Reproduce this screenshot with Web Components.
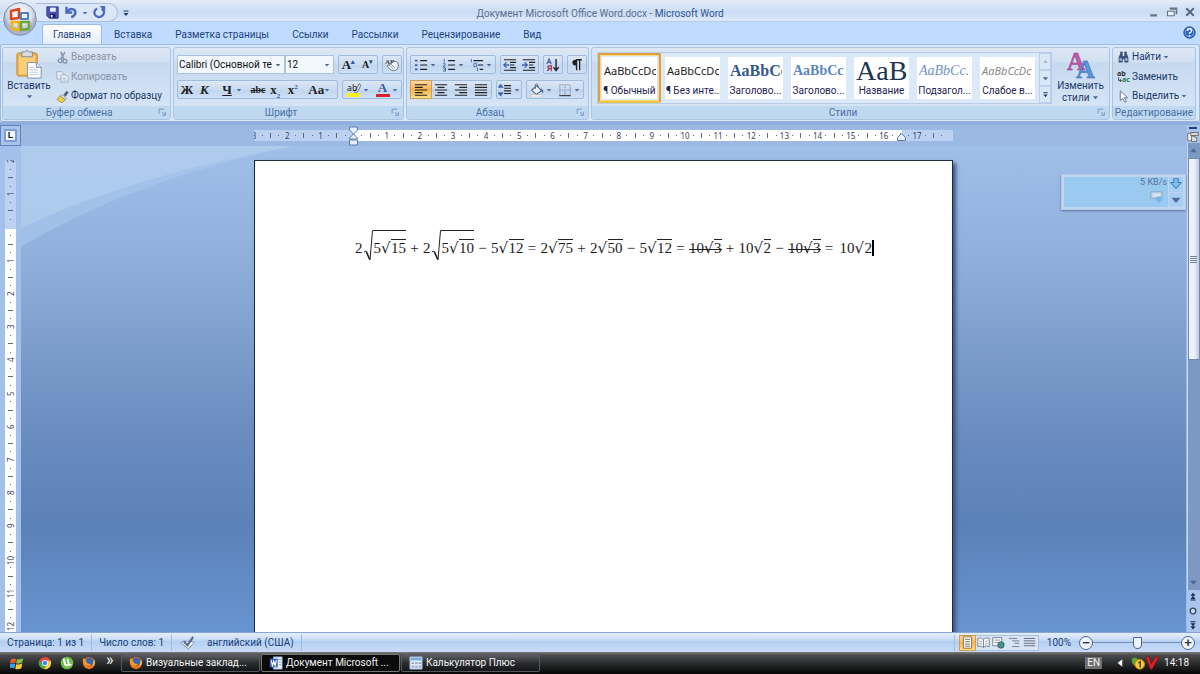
<!DOCTYPE html>
<html lang="ru">
<head>
<meta charset="utf-8">
<title>Документ Microsoft Office Word.docx - Microsoft Word</title>
<style>
html,body{margin:0;height:100%;overflow:hidden}
body{font-family:Roboto,"Noto Sans",sans-serif;font-size:10px;line-height:14px;color:#1b3a6b}
</style>
</head>
<body>
<word-app></word-app>
<script>
const define = (name, css, html, ready) => {
  const t = document.createElement('template');
  t.innerHTML = `<style>*{box-sizing:border-box}button{font:inherit;color:inherit;background:none;border:0;padding:0;margin:0}${css}</style>`;
  customElements.define(name, class extends HTMLElement {
    connectedCallback() {
      if (this.shadowRoot) return;
      const root = this.attachShadow({mode: 'open'});
      root.append(t.content.cloneNode(true));
      const body = document.createElement('template');
      body.innerHTML = typeof html === 'function' ? html(this) : html;
      root.append(body.content);
      if (ready) ready(this, root);
    }
  });
};

const lines = (rows, c = '#222') => rows.map(([x, y, w]) => `<path d="M${x} ${y}h${w}" stroke="${c}" stroke-width="1.3"/>`).join('');
const ICONS = {
  save: '<path d="M1 1h14v14H4l-3-3z" fill="#4a54b4" stroke="#2a317d"/><path d="M5 2h7v5H5z" fill="#e9eefb"/><path d="M5 9.500h7V15H5z" fill="#252b6a"/><path d="M6 11h2v3H6z" fill="#fff"/>',
  undo: '<path d="M3 1v7h7M3.500 7.500C7 2 14 3 14 8c0 3-2 4.500-5 6" fill="none" stroke="#4969c2" stroke-width="3"/>',
  redo: '<path d="M5 3C1 5 .5 10 4 12.500c4 2.500 9 0 9.500-4C14 6 12 4.500 10.500 3.500" fill="none" stroke="#4969c2" stroke-width="2.800"/><path d="M8 0h7v7z" fill="#4969c2"/>',
  more: '<path d="M3 3h10v2H3zM3 8h10l-5 6z" fill="#1b3a6b"/>',
  down: '<path d="M2 5h12l-6 7z" fill="#4c6a98"/>',
  up: '<path d="M3 11h10L8 5z" fill="#98a9c4"/>',
  paste: '<rect x="2" y="3" width="21" height="24" rx="2" fill="#f0b44b" stroke="#c68a2c"/><path d="M4 6h17v19H4z" fill="#f8cf78"/><path d="M7 2h3q2-3 5 0h3v5H7z" fill="#d7dbe2" stroke="#7e8796"/><path d="M13 13h9l5 5v11H13z" fill="#fff" stroke="#7d90b5"/><path d="M22 13v5h5" fill="#dbe6f5" stroke="#7d90b5"/><path d="M15 18h5M15 20.500h9M15 23h9M15 25.500h9" stroke="#b6c6df"/>',
  cut: '<path d="M6 1l3.500 9M11 1L6 10" stroke="#8293b0" stroke-width="1.800"/><circle cx="5" cy="12" r="2.300" fill="none" stroke="#8293b0" stroke-width="1.700"/><circle cx="11" cy="12.500" r="2.300" fill="none" stroke="#8293b0" stroke-width="1.700"/>',
  copy: '<path d="M1 2h6l3 3v6H1z" fill="#e8edf5" stroke="#9aa8be"/><path d="M6 6h6l3 3v6H6z" fill="#e8edf5" stroke="#9aa8be"/><path d="M8 10h4M8 12.500h5" stroke="#9aa8be"/>',
  brush: '<path d="M9 6l4-5 2.500 2L12 8z" fill="#53607c"/><path d="M7 5.500l6 4.500-1.500 2L5 7.500z" fill="#dfe5ef" stroke="#65718a" stroke-width=".7"/><path d="M5 7l6 5-3 3.500C5 15 2 13 1 11c2 0 3-2 4-4z" fill="#f1ce4a" stroke="#8d741c" stroke-width=".7"/>',
  eraser: '<text x="0" y="7" font-size="8" font-family="Liberation Serif" font-weight="bold" fill="#444">AB</text><path d="M3 10q-1-3 2-2l5-4q4-1 5 3 1 5-3 7-4 2-9-4z" fill="#f7f9fc" stroke="#57647c"/><path d="M5 8l5 5M7 7l4 4" stroke="#57647c" stroke-width=".8"/>',
  bullets: '<path d="M1 2h3v2H1zM1 7h3v2H1zM1 12h3v2H1z" fill="#3e67ab"/>' + lines([[7,3,8],[7,8,8],[7,13,8]]),
  numbers: '<path d="M2.500 1v4M1 6.500h2.500v1.500L1 10h3M1 11.500h3v3.500H1M2 13.300h2" fill="none" stroke="#3e67ab"/>' + lines([[7,3,8],[7,8,8],[7,13,8]]),
  multi: '<path d="M1.500 1v4M4.500 6h3v4h-3zM8.500 11v4" fill="none" stroke="#3e67ab"/>' + lines([[4,3,11],[9,8,6],[11,13,4]]),
  outdent: lines([[1,2,14],[8,5,7],[8,8,5],[8,11,7],[1,14,14]]) + '<path d="M7 8H2M4 5L1 8l3 3" stroke="#3e67ab" stroke-width="1.600" fill="none"/>',
  indent: lines([[1,2,14],[8,5,7],[8,8,5],[8,11,7],[1,14,14]]) + '<path d="M0 8h5M3 5l3 3-3 3" stroke="#3e67ab" stroke-width="1.600" fill="none"/>',
  sort: '<path d="M1 7l2.500-6L6 7M2 5h3" fill="none" stroke="#4561b0" stroke-width="1.400"/><path d="M6 15V9H3.500q-3 1.500 0 3H6M4 12l-2.500 3" fill="none" stroke="#a03445" stroke-width="1.400"/><path d="M11.500 1v12M8.500 10.500l3 4 3-4" fill="none" stroke="#222" stroke-width="1.600"/>',
  pilcrow: '<path d="M7.500 14V2M11 14V2M13.500 2H7" stroke="#222" stroke-width="1.500"/><path d="M8 2H6a3 3 0 000 6.500h2z" fill="#222"/>',
  left: lines([[1,2,14],[1,5,9],[1,8,14],[1,11,9],[1,14,14]]),
  center: lines([[1,2,14],[4,5,8],[1,8,14],[4,11,8],[1,14,14]]),
  right: lines([[1,2,14],[6,5,9],[1,8,14],[6,11,9],[1,14,14]]),
  justify: lines([[1,2,14],[1,5,14],[1,8,14],[1,11,14],[1,14,14]]),
  spacing: lines([[7,3,8],[7,6,8],[7,9,8],[7,12,8]]) + '<path d="M3 3v3M3 10v3M0 5l3-4 3 4zM0 11l3 4 3-4z" fill="#3e67ab" stroke="#3e67ab" stroke-width=".6"/>',
  fill: '<path d="M2 8l6-5 5 6-6 4z" fill="#eef3fa" stroke="#4b5f84" stroke-width="1.200"/><path d="M6 7V2q2-2 3 0v3" fill="none" stroke="#4b5f84"/><path d="M12 6q4 1 3 6-2-1-2-4z" fill="#3e67ab"/><path d="M1 13.500h13V16H1z" fill="#fff" stroke="#a8a296" stroke-width=".6"/>',
  borders: '<path d="M2 2h12v12H2zM8 2v12M2 8h12" fill="none" stroke="#8796b1" stroke-width="1.300" stroke-dasharray="1.500 1"/><path d="M1.500 14.500h13" stroke="#444" stroke-width="1.300"/>',
  marker: '<path d="M9 9l5-8 2 1.500L12 10l-3 2z" fill="#dfe5ef" stroke="#53607c"/><path d="M0 11.500h15V16H0z" fill="#ffef20"/><text x="0" y="9" font-size="10" font-family="Noto Sans" fill="#222">ab</text>',
  styles: '<g font-family="Liberation Serif" font-weight="bold"><text x="0" y="19" font-size="25" fill="#c45aa8" stroke="#8c3a86" stroke-width=".5">A</text><text x="9" y="27" font-size="26" fill="#5a96dd" stroke="#2d62aa" stroke-width=".5">A</text></g>',
  find: '<path d="M2 14V8l2-5h3v11zM9 14V3h3l2 5v6zM7 6h2v4H7z" fill="#3c5378"/><path d="M3 9h3v3H3zM10 9h3v3h-3z" fill="#9db5d7"/><path d="M4 1h3v2H4zM9 1h3v2H9z" fill="#26395a"/>',
  replace: '<g font-family="Noto Sans" font-weight="bold" font-size="9"><text x="0" y="7" fill="#333">ab</text><text x="6" y="15" fill="#2c8052">ac</text></g><path d="M2 9v4h3M3.500 11l2 2-2 2" fill="none" stroke="#333"/>',
  cursor: '<path d="M4 1v12l3-2.500L9.500 15l2-1-2.500-4.500h4z" fill="#fff" stroke="#53607c"/>',
  launcher: '<path d="M2 10V2h9" fill="none" stroke="#6c8cba" stroke-width="1.500"/><path d="M7 7l5 5M13 7v6H7" fill="none" stroke="#6c8cba" stroke-width="1.500"/>',
  help: '<circle cx="8" cy="8" r="7" fill="#2d63c4" stroke="#16408f"/><circle cx="8" cy="8" r="5.300" fill="none" stroke="#a9c8f8" stroke-width=".8"/><path d="M5.500 6q0-2.500 2.500-2.500T10.500 6Q10.500 7.500 8 8.500v1" fill="none" stroke="#fff" stroke-width="1.800"/><path d="M7 11h2v2H7z" fill="#fff"/>',
  min: '<path d="M3 11h9v3H3z" fill="#697386"/>',
  max: '<path d="M5 3h9v8M5 4h9" fill="none" stroke="#697386" stroke-width="2"/><path d="M2 7h9v6H2z" fill="#eaf1fb" stroke="#697386" stroke-width="1.500"/>',
  close: '<path d="M3 3l10 10M13 3L3 13" stroke="#5a6579" stroke-width="2.500"/>',
  orb: '<defs><radialGradient id="o" cy=".35"><stop offset="0" stop-color="#fff"/><stop offset=".7" stop-color="#dfe3ec"/><stop offset="1" stop-color="#aab3c7"/></radialGradient></defs><circle cx="17" cy="17" r="16.300" fill="url(#o)" stroke="#7f90b2"/><g fill="none" stroke-width="2.600" stroke-linejoin="round"><path d="M8 9l8-2v9l-8 1z" stroke="#d9481f"/><path d="M18 11h7v6h-7z" stroke="#4b80cb" stroke-width="2"/><path d="M9 20h7v8l-7-1z" stroke="#f0b21c"/><path d="M18 20h8v7l-8 1z" stroke="#72a63a"/></g>',
  spell: '<path d="M1 8q3-3 7-1 3-2 7 1l-6 7z" fill="#fff" stroke="#7288ab"/><path d="M4 7l4 4 6-9" fill="none" stroke="#4f6893" stroke-width="2.200"/>',
  vprint: '<path d="M3 1h10v14H3z" fill="#fff" stroke="#8a5c22"/>' + lines([[5,4,6],[5,7,6],[5,10,6],[5,12.500,6]], '#777'),
  vread: '<path d="M8 4Q5 1 1 3v10q4-2 7 1 3-3 7-1V3q-4-2-7 1zM8 4v10" fill="#fff" stroke="#5b6b85"/><path d="M3 6l3 1M3 9l3 1M10 7l3-1M10 10l3-1" stroke="#777"/>',
  vweb: '<path d="M1 2h11v10H1z" fill="#fff" stroke="#5b6b85"/>' + lines([[3,5,7],[3,8,5]], '#999') + '<circle cx="11" cy="11" r="4" fill="#4d8f86" stroke="#2f5e6a"/>',
  voutline: lines([[1,3,10],[5,6,9],[8,9,6],[5,13,9]], '#7d8898'),
  vdraft: lines([[1,3,14],[1,6,14],[1,9,14],[1,12,14]], '#6b7687'),
  win: '<path d="M1 4q3-2 6-.5L6 8Q3 7 0 8.500z" fill="#ef5a2b"/><path d="M8 3.500q3 1 7-1L14 7.500q-4 2-7 .8z" fill="#7fc242"/><path d="M0 9.500Q3 8 6 9L5 14Q2 13-1 14z" fill="#35a2ef"/><path d="M7 9.500q3 1 7-1L13 14q-4 2-7 .5z" fill="#fcc82d"/>',
  chrome: '<circle cx="8" cy="8" r="7" fill="#e9453a"/><path d="M1.500 5A7 7 0 007 15l3-5-4-1z" fill="#3cab50"/><path d="M15 8a7 7 0 01-8 7l3.500-6V5.500h4z" fill="#fbcf37"/><circle cx="8" cy="8" r="3.500" fill="#fff"/><circle cx="8" cy="8" r="2.600" fill="#4486ee"/>',
  ut: '<circle cx="8" cy="8" r="7.200" fill="#6dbf45"/><path d="M4 3l2 7q3 2 4-1L8.500 3.500M10 9q1 2 3 .5" fill="none" stroke="#fff" stroke-width="2.200"/>',
  fox: '<circle cx="8" cy="8" r="7" fill="#e8751c"/><circle cx="8.500" cy="6.500" r="4.500" fill="#3764b5"/><path d="M1 6q0 4 4 5 5 1 5-2-5 0-5-3L2 2q-1.500 2-1 4z" fill="#f4962a"/><path d="M14 4q2 5-2 8l1-5z" fill="#fbc53c"/>',
  word: '<path d="M5 1h10v14H5z" fill="#f3f7fd" stroke="#7e9bd0"/><path d="M10 4h4M11 7h3M11 10h3" stroke="#7e9bd0"/><path d="M1 3h9v10H1z" fill="#3767bb"/><path d="M2.500 5l1.500 6 1.500-5L7 11l1.500-6" fill="none" stroke="#fff" stroke-width="1.300"/>',
  calc: '<path d="M1 1h14v14H1z" fill="#dfe9f7" stroke="#8aa6cc"/><path d="M2 2h12v3H2z" fill="#7ba9de"/><path d="M3 7h3v2H3zM7 7h3v2H7zM11 7h3v2h-3zM3 11h3v2H3zM7 11h3v2H7zM11 11h3v2h-3z" fill="#93a7c2"/>',
  tri: '<path d="M11 3v10L5 8z" fill="#fff"/>',
  badge: '<path d="M1 3q4-3 7 1l-3 7Q0 9 1 3z" fill="#5fa336"/><circle cx="10" cy="9.500" r="5.500" fill="#f8c62c" stroke="#c98d10"/><path d="M8.500 8l2-1.500V13" fill="none" stroke="#333" stroke-width="1.500"/>',
  vee: '<path d="M1 1h4l2 8 5-8h4L8 15H6z" fill="#d9222a" stroke="#8f0d14" stroke-width=".7"/>',
  arrowbox: '<path d="M5 1h6v5h4l-7 8-7-8h4z" fill="#7fc0f0" stroke="#3b80bf" stroke-width="1.500"/>',
  drive: '<path d="M2 4h12v7H2z" fill="#c3d6e8" stroke="#8ba9c5"/><path d="M4 6h8v3H4z" fill="#dfe9f2"/><path d="M8 9h5v3h2l-4.500 4L6 12h2z" fill="#75b7ea"/>',
  rulerbtn: '<path d="M1 3h8v10H1z" fill="#eee" stroke="#555"/><path d="M5 2h10v4H5zM6 6v8h7V9z" fill="#ddd" stroke="#555"/>',
  pgup: '<path d="M8 1l4 5H4zM8 6l4 5H4zM4 12h8v1.500H4z" fill="#182a4a"/>',
  pgdn: '<path d="M4 2h8v1.500H4zM4 5h8l-4 5zM4 10h8l-4 5z" fill="#182a4a"/>',
  ball: '<circle cx="8" cy="8" r="4.500" fill="#c8d8ef" stroke="#33445f" stroke-width="2"/>'
};
define('ui-icon', ':host{display:inline-block;flex:none;width:var(--s,14px);height:var(--s,14px)}svg{display:block;width:100%;height:100%}',
  el => `<svg viewBox="0 0 ${el.getAttribute('box') || 16} ${el.getAttribute('box') || 16}" aria-hidden="true">${ICONS[el.getAttribute('name')]}</svg>`);

/* toolbar button: optional icon, slotted text and drop-down arrow */
define('tool-button', `
:host{display:flex;flex:none}
button{display:flex;align-items:center;justify-content:center;gap:2px;width:100%;white-space:nowrap}
:host([on]) button{background:linear-gradient(#fdd9a0,#fdb34c 50%,#fee28a);outline:1px solid #c9a05a}
.a{--s:6px}`,
  el => `<button aria-label="${el.getAttribute('label') || ''}">${el.hasAttribute('icon') ? `<ui-icon name="${el.getAttribute('icon')}"></ui-icon>` : ''}<slot></slot>${el.hasAttribute('arrow') ? '<ui-icon class="a" name="down"></ui-icon>' : ''}</button>`,
  (el, root) => { if (!el.hasAttribute('label')) root.querySelector('button').removeAttribute('aria-label'); });

define('tool-set', ':host{display:flex;flex:none;height:19px;border:1px solid #9ebbe0;border-radius:2px;background:linear-gradient(#dbe7f6,#c9dbf1 50%,#bfd4ee 51%,#cfe0f5)}::slotted(*){flex:1 1 0}', '<slot></slot>');

define('combo-box', `
:host{display:grid;height:19px;border:1px solid #abc1de;background:#f2f7fd}
select{grid-area:1/1;appearance:none;border:0;background:none;font:inherit;color:#111;padding:0 12px 0 1px;width:100%;min-width:0;margin:0;overflow:hidden;text-overflow:clip}
ui-icon{grid-area:1/1;--s:6px;justify-self:end;align-self:center;margin-right:3px;pointer-events:none}`,
  el => `<select aria-label="${el.getAttribute('label')}"><option>${el.getAttribute('value')}</option></select><ui-icon name="down"></ui-icon>`);

define('ribbon-group', `
:host{display:flex;flex-direction:column;border:1px solid #a9c3e2;border-radius:3px;background:linear-gradient(#dee8f5,#d1dff1 20%,#c7d9ee 21%,#d9e8f8);overflow:hidden}
.c{flex:1;min-height:0;display:flex}
footer{flex:none;height:13px;line-height:13px;background:#c1d8f1;color:#4b6fa8;display:flex;align-items:center}
span{flex:1;text-align:center;white-space:nowrap}
ui-icon{--s:9px;margin:0 3px}`,
  el => `<div class="c"><slot></slot></div><footer><span>${el.getAttribute('label')}</span>${el.hasAttribute('launch') ? '<ui-icon name="launcher"></ui-icon>' : ''}</footer>`);

define('style-card', `
:host{display:block;flex:none;width:63px;height:50px}
button{display:flex;flex-direction:column;width:100%;height:100%;padding:3px;border:1px solid transparent}
:host([on]) button{border:2px solid #e0a040;border-bottom-color:#f0c440;border-radius:2px;padding:2px;box-shadow:inset 0 0 0 1px #fbd88a}
.w{display:flex;flex-direction:column;justify-content:space-between;background:#fff;width:100%;flex:1;overflow:hidden;padding:0 1px;color:#1c2350}
.s{display:flex;align-items:center;height:28px;overflow:hidden;white-space:nowrap;padding-left:1px;color:var(--c,#222);font:var(--f,11px/16px "Noto Sans",sans-serif)}
.n{height:15px;line-height:14px;text-align:center;white-space:nowrap}`,
  el => `<button><span class="w"><span class="s">${el.getAttribute('sample')}</span><span class="n">${el.textContent}</span></span></button>`);

define('title-bar', `
:host{display:grid;grid-template-columns:1fr auto 1fr;align-items:center;height:22px;background:linear-gradient(#e4ecf8,#d3e1f5 40%,#cbdcf4 60%,#dde9f9);border-bottom:1px solid #b4cdee;position:relative}
.orb{position:absolute;left:3px;top:2px;z-index:2;display:block}
.orb ui-icon{--s:34px}
.l{display:flex;align-items:center}
.q{display:flex;align-items:center;gap:5px;margin-left:36px;height:19px;width:82px;padding-left:10px;border:1px solid #a9bfdf;border-left:0;border-radius:0 10px 10px 0;background:#dbe7f7}
.q>*{--s:13px}
.more{--s:8px;margin-left:4px;display:block}
h1{margin:0;font-size:10px;font-weight:400;line-height:22px;padding-top:3px;text-align:center;color:#5c6f8f}
b{font-weight:400;color:#2f5596}
.w{display:flex;justify-self:end;gap:6px;--s:12px;margin:0 4px 2px 0}
.q .d{--s:6px}`,
`<button class="orb" aria-label="Office"><ui-icon name="orb" box="34"></ui-icon></button>
<div class="l"><div class="q"><tool-button icon="save" label="Сохранить"></tool-button><tool-button icon="undo" label="Отменить"></tool-button><ui-icon class="d" name="down"></ui-icon><tool-button icon="redo" label="Повторить"></tool-button></div>
<tool-button class="more" icon="more" label="Настройка панели"></tool-button></div>
<h1>Документ Microsoft Office Word.docx - <b>Microsoft Word</b></h1>
<div class="w"><tool-button icon="min" label="Свернуть"></tool-button><tool-button icon="max" label="Развернуть"></tool-button><tool-button icon="close" label="Закрыть"></tool-button></div>`);

define('ribbon-tabs', `
:host{display:flex;align-items:flex-end;height:22px;background:#bfdbff;padding:0 4px 0 42px}
nav{display:flex;flex:1;gap:1px}
a{display:block;height:20px;padding:0 10px;line-height:19px;border:1px solid transparent;border-bottom:0;color:#1e4480;text-decoration:none;white-space:nowrap}
a.on{background:linear-gradient(#fff,#e3edf9);border-color:#9dbbe2;border-radius:3px 3px 0 0}
tool-button{--s:13px;margin-bottom:5px}`,
`<nav><a href="#home" class="on">Главная</a><a href="#insert">Вставка</a><a href="#layout">Разметка страницы</a><a href="#refs">Ссылки</a><a href="#mail">Рассылки</a><a href="#review">Рецензирование</a><a href="#view">Вид</a></nav><tool-button icon="help" label="Справка"></tool-button>`);

define('ribbon-body', `
:host{display:flex;gap:2px;height:78px;padding:2px 3px 1px 1px;background:#dbe8f7;border:1px solid #9dbbe2;border-bottom-color:#8fb2da;border-radius:3px}
.clip{width:169px}.font{width:231px}.para{width:183px}.sty{flex:1;min-width:0}.edit{width:84px}
.paste{width:46px;margin-left:3px;padding-top:2px;display:block}
.paste button,.chg button{display:flex;flex-direction:column;align-items:center;width:100%;white-space:nowrap}
.paste ui-icon{--s:29px}.paste .a,.chg .a{--s:7px}
.col{display:flex;flex-direction:column;justify-content:space-between;align-items:flex-start;margin-left:4px;--s:13px;padding:2px 0 3px}
.dim{color:#8a94a6}
.rows{display:flex;flex-direction:column;gap:6px;padding:7px 3px 0;width:100%;--s:14px}
.row{display:flex;gap:4px}
.g{display:inline-block;width:14px;text-align:center;color:#222;font:bold 13px/16px "Liberation Serif",serif}
i.g{font-style:italic}
.sm{font-size:10px}
sub,sup{font-size:7px;line-height:0;color:#35589c}
.fc{border-bottom:3px solid #d8202a;line-height:12px;color:#35589c}
.gal{display:flex;margin:4px 0 0 5px;height:52px;border:1px solid #b6cce8;background:#dce9f8;flex:1;min-width:0;overflow:hidden}
.sc{display:flex;flex-direction:column;width:13px;margin-left:auto;--s:7px}
.sc>*{flex:1;border:1px solid #bdd0ea;background:#d9e6f6}
.chg{width:57px;padding-top:3px;--s:28px}
.two{line-height:10px}`,
`<ribbon-group class="clip" label="Буфер обмена" launch>
 <div class="paste"><button><ui-icon name="paste" box="30"></ui-icon>Вставить<ui-icon class="a" name="down"></ui-icon></button></div>
 <div class="col"><tool-button class="dim" icon="cut">Вырезать</tool-button><tool-button class="dim" icon="copy">Копировать</tool-button><tool-button icon="brush">Формат по образцу</tool-button></div>
</ribbon-group>
<ribbon-group class="font" label="Шрифт" launch><div class="rows">
 <div class="row"><div style="display:flex;width:157px"><combo-box style="width:108px" label="Шрифт" value="Calibri (Основной текст)"></combo-box><combo-box style="width:49px" label="Размер шрифта" value="12"></combo-box></div>
 <tool-set style="width:40px"><tool-button label="Увеличить шрифт"><span class="g">A<sup>▴</sup></span></tool-button><tool-button label="Уменьшить шрифт"><span class="g sm">A<sup>▾</sup></span></tool-button></tool-set>
 <tool-set style="width:20px"><tool-button icon="eraser" label="Очистить формат"></tool-button></tool-set></div>
 <div class="row"><tool-set style="width:161px"><tool-button><span class="g">Ж</span></tool-button><tool-button><i class="g">К</i></tool-button><tool-button arrow style="flex-grow:2"><u class="g">Ч</u></tool-button><tool-button><s class="g" style="font-size:10px">abc</s></tool-button><tool-button><span class="g">x<sub>2</sub></span></tool-button><tool-button><span class="g">x<sup>2</sup></span></tool-button><tool-button arrow style="flex-grow:2"><span class="g">Aa</span></tool-button></tool-set>
 <tool-set style="width:60px"><tool-button icon="marker" arrow label="Выделение цветом"></tool-button><tool-button arrow><span class="g fc">A</span></tool-button></tool-set></div>
</div></ribbon-group>
<ribbon-group class="para" label="Абзац" launch><div class="rows">
 <div class="row"><tool-set style="width:86px"><tool-button icon="bullets" arrow label="Маркеры"></tool-button><tool-button icon="numbers" arrow label="Нумерация"></tool-button><tool-button icon="multi" arrow label="Многоуровневый список"></tool-button></tool-set>
 <tool-set style="width:39px"><tool-button icon="outdent" label="Уменьшить отступ"></tool-button><tool-button icon="indent" label="Увеличить отступ"></tool-button></tool-set>
 <tool-set style="width:20px"><tool-button icon="sort" label="Сортировка"></tool-button></tool-set><tool-set style="width:20px"><tool-button icon="pilcrow" label="Знаки абзаца"></tool-button></tool-set></div>
 <div class="row"><tool-set style="width:82px"><tool-button on icon="left" label="По левому краю"></tool-button><tool-button icon="center" label="По центру"></tool-button><tool-button icon="right" label="По правому краю"></tool-button><tool-button icon="justify" label="По ширине"></tool-button></tool-set>
 <tool-set style="width:26px"><tool-button icon="spacing" arrow label="Интервал"></tool-button></tool-set>
 <tool-set style="width:58px"><tool-button icon="fill" arrow label="Заливка"></tool-button><tool-button icon="borders" arrow label="Границы"></tool-button></tool-set></div>
</div></ribbon-group>
<ribbon-group class="sty" label="Стили" launch>
 <div class="gal">
 <style-card on sample="AaBbCcDc">¶ Обычный</style-card>
 <style-card sample="AaBbCcDc">¶ Без инте...</style-card>
 <style-card sample="AaBbCc" style='--c:#33598d;--f:bold 16px/20px "Liberation Serif",serif'>Заголово...</style-card>
 <style-card sample="AaBbCc" style='--c:#5a86bd;--f:bold 14px/20px "Liberation Serif",serif'>Заголово...</style-card>
 <style-card sample="AaB" style='--c:#23344f;--f:28px/28px "Liberation Serif",serif'>Название</style-card>
 <style-card sample="AaBbCc." style='--c:#6f93c4;--f:italic 14px/20px "Liberation Serif",serif'>Подзагол...</style-card>
 <style-card sample="AaBbCcDc" style='--c:#888;--f:italic 11px/16px "Noto Sans",sans-serif'>Слабое в...</style-card>
 <div class="sc"><tool-button icon="up" label="Вверх"></tool-button><tool-button icon="down" label="Вниз"></tool-button><tool-button icon="more" label="Ещё"></tool-button></div>
 </div>
 <div class="chg"><button><ui-icon name="styles" box="28"></ui-icon><span>Изменить</span><span class="two">стили <ui-icon class="a" name="down"></ui-icon></span></button></div>
</ribbon-group>
<ribbon-group class="edit" label="Редактирование"><div class="col"><tool-button icon="find" arrow>Найти</tool-button><tool-button icon="replace">Заменить</tool-button><tool-button icon="cursor" arrow>Выделить</tool-button></div></ribbon-group>`);

/* centimetre ruler: each cell holds a number and three tick marks */
define('cm-ruler', `
:host{display:block;overflow:hidden;font-family:"Noto Sans",sans-serif;font-size:8px;line-height:11px;color:#34445e}
.g{display:grid}
.c{display:grid;align-items:center;justify-items:center;min-width:0}
.c>*{min-width:0}
i{background:#5c6a82;width:1px;height:1px}
:host([axis=h]){height:11px;background:linear-gradient(90deg,#bdd2f2 99px,#fff 99px 648px,#bdd2f2 648px)}
:host([axis=h]) .g{width:696px;margin-left:-4px;grid-template-columns:repeat(21,1fr)}
:host([axis=h]) .c{height:11px;grid-template-columns:repeat(4,1fr)}
:host([axis=h]) .m{height:5px}
:host([axis=v]){width:11px;background:linear-gradient(#bdd2f2 69px,#fff 69px)}
:host([axis=v]) .g{height:498px;margin-top:-3px;grid-template-rows:repeat(15,1fr)}
:host([axis=v]) .c{grid-template-rows:repeat(4,1fr);width:11px;min-height:0}
:host([axis=v]) .c>*{min-height:0}
:host([axis=v]) .m{width:5px}
:host([axis=v]) b{writing-mode:vertical-rl;transform:rotate(180deg);height:8px;display:flex;justify-content:center}
b{font-weight:400}`,
  el => {
    const h = el.getAttribute('axis') === 'h', from = h ? -3 : -2, n = h ? 21 : 15;
    let s = '';
    for (let k = 0; k < n; k++) { const v = Math.abs(from + k); s += `<div class="c"><b>${v || ''}</b><i></i><i class="m"></i><i></i></div>`; }
    return `<div class="g">${s}</div>`;
  });

/* square root: a glyph for plain radicands, a drawn tall surd for nested ones */
define('math-root', `
:host{display:inline-flex;align-items:baseline}
.g{width:10px;font:15px/18px "DejaVu Sans",sans-serif}
.r{border-top:1px solid #222;line-height:17px}
:host([bare]) .r{border-color:transparent}
:host([big]){align-items:flex-start;margin-left:1px}
:host([big]) svg{width:9px;height:31px;flex:none}
:host([big]) .r{height:36px;padding:6px 0 0 1px;line-height:22px;display:flex;align-items:baseline}`,
  el => (el.hasAttribute('big') ? '<svg viewBox="0 0 9 31" aria-hidden="true"><path d="M0 22l2-1 4 9L8.500 .5h.5" fill="none" stroke="#222"/><path d="M2.500 22l3 7" stroke="#222" stroke-width="1.500"/></svg>' : '<span class="g">√</span>') + '<span class="r"><slot></slot></span>');

define('math-line', `
:host{display:flex;align-items:center;height:38px;color:#1c1c1c;font:15px/22px "Liberation Serif",serif;white-space:nowrap}
s,span{display:inline-flex;align-items:baseline}
.o{width:9px;margin:0 4px;justify-content:center}
s{position:relative;text-decoration:none}
s::after{content:"";position:absolute;left:0;right:0;top:55%;height:1px;background:#222}
.k{width:2px;height:16px;background:#000}
.last{margin-left:2px}`,
`<span>2</span><math-root big>5<math-root>15</math-root></math-root><span class="o">+</span><span>2</span><math-root big>5<math-root>10</math-root></math-root><span class="o">−</span><span>5<math-root>12</math-root></span><span class="o">=</span><span>2<math-root>75</math-root></span><span class="o">+</span><span>2<math-root>50</math-root></span><span class="o">−</span><span>5<math-root>12</math-root></span><span class="o">=</span><s>10<math-root>3</math-root></s><span class="o">+</span><span>10<math-root>2</math-root></span><span class="o">−</span><s>10<math-root>3</math-root></s><span class="o">=</span><span class="last">10<math-root bare>2</math-root></span><span class="k"></span>`);

define('speed-meter', `
:host{display:flex;width:125px;height:36px;padding:2px;border:1px solid #b4cbe9;background:#c3d8f0;box-shadow:0 1px 2px #5b7299;opacity:.95}
.m{flex:1;background:#9ccbf2;color:#51718f;font-size:9px;line-height:11px;display:flex;flex-direction:column;align-items:flex-end;padding:0 1px}
.m ui-icon{--s:15px;margin-right:3px}
.b{display:flex;flex-direction:column;gap:1px;width:14px;margin-left:1px;--s:12px}
.b>*{flex:1;background:#a9d0f3}`,
`<div class="m"><span>5 KB/s</span><ui-icon name="drive"></ui-icon></div><div class="b"><tool-button icon="arrowbox" label="Загрузки"></tool-button><tool-button icon="down" label="Меню"></tool-button></div>`);

define('scroll-column', `
:host{display:flex;flex-direction:column;align-items:center;width:13px;background:#a9c5ec;--s:12px}
hr{width:8px;height:2px;border:0;background:#24427a;margin:2px 0}
.t{width:100%;flex:1;display:flex;flex-direction:column;background:#7c98c3;border-left:1px solid #c6daf5;--s:9px}
.t tool-button{height:15px}
.th{height:202px;border:1px solid #7489ab;background:linear-gradient(90deg,#eef2f8 50%,#b9cbe6);display:flex;flex-direction:column;justify-content:center;align-items:center;gap:1px}
.th i{width:7px;height:1px;background:#6f7f99}
.end{margin-top:auto}
.up{transform:rotate(180deg)}
.pg{display:flex;flex-direction:column;padding:2px 0;gap:4px;--s:10px}`,
`<hr><ui-icon name="rulerbtn"></ui-icon><div class="t"><tool-button class="up" icon="down" label="Прокрутить вверх"></tool-button><div class="th"><i></i><i></i><i></i><i></i></div><tool-button class="end" icon="down" label="Прокрутить вниз"></tool-button></div>
<div class="pg"><tool-button icon="pgup" label="Предыдущая страница"></tool-button><tool-button icon="ball" label="Объект перехода"></tool-button><tool-button icon="pgdn" label="Следующая страница"></tool-button></div>`);

define('doc-area', `
:host{display:grid;grid-template-columns:21px 1fr 14px;grid-template-rows:21px 1fr;background:#9bbbe6;border-top:3px solid #8fb0dc;position:relative;overflow:hidden;min-height:0}
.tab{border:1px solid #5f83bf;background:#a9c3ea;display:grid;place-items:center}
.tab span{width:13px;height:13px;border:2px solid #7f9fd2;background:#f4f7fc;display:grid;place-items:center;font:bold 9px/9px "Liberation Sans",sans-serif;color:#222}
.top{display:flex;justify-content:center;align-items:center;background:#9bb9e2}
.hr{width:699px;position:relative}
.mk{position:absolute;top:-4px;left:94px;width:11px;height:20px}
.mr{position:absolute;top:3px;left:642px;width:11px;height:8px}
.side{background:#a3c0ea;display:flex;justify-content:center;padding-top:14px;min-height:0;overflow:hidden}
.canvas{display:flex;justify-content:center;padding-top:14px;min-height:0;overflow:hidden;position:relative;background:linear-gradient(#9fbfe9,#93b1dd 20%,#83a4d1 35%,#6b8dc0 58%,#5b82b8 78%,#6894d1)}
.sw{position:absolute;left:0;top:0;width:280px;height:110px}
.page{position:relative;width:699px;height:1000px;background:#fff;border:1px solid #1d2b42;padding:68px 50px 0 100px;box-shadow:3px 3px 4px #3c567f}
scroll-column{grid-column:3;grid-row:1/3;justify-self:center}
speed-meter{position:absolute;right:14px;top:49px}`,
`<div class="tab"><span>L</span></div>
<div class="top"><div class="hr"><cm-ruler axis="h"></cm-ruler>
<svg class="mk" viewBox="0 0 11 20" aria-hidden="true"><path d="M1.500 1h8v3l-4 4-4-4zM5.500 8l4 4v1h-8v-1zM1.500 14h8v5h-8z" fill="#e8effa" stroke="#5d7cad"/></svg>
<svg class="mr" viewBox="0 0 11 8" aria-hidden="true"><path d="M5.500 .5l4 4v3h-8v-3z" fill="#e8effa" stroke="#5d7cad"/></svg></div></div>
<div class="side"><cm-ruler axis="v"></cm-ruler></div>
<div class="canvas"><svg class="sw" viewBox="0 0 280 110" aria-hidden="true"><path d="M0 0h272Q110 35 0 101z" fill="#a9c8ec" opacity=".6"/><path d="M0 0h272Q110 30 0 82z" fill="#b2cff0" opacity=".7"/></svg>
<div class="page"><math-line></math-line></div></div>
<scroll-column></scroll-column><speed-meter></speed-meter>`);

define('status-bar', `
:host{display:flex;align-items:center;height:20px;background:linear-gradient(#e3eefc,#cfe0f8 30%,#b5cff1 45%,#c9dcf8);border-top:1px solid #86a5d4;color:#1b3f7a}
span{padding:0 7px;border-right:1px solid #a0bce2;line-height:17px;white-space:nowrap}
.i{margin-left:8px;--s:15px}
.l{padding-left:12px}
.v{margin-left:auto;border-left:1px solid #a0bce2;padding-left:4px;display:flex}
.v div{display:flex;height:16px;width:80px;border:1px solid #a9c0e0;background:#d7e5f7;--s:13px}
.v tool-button{flex:1}
.z{border:0;padding:0 8px}
.c{width:14px;height:14px;border:1px solid #4d648c;border-radius:50%;background:#eef4fc;font:bold 13px/11px "Liberation Sans",sans-serif;color:#333;text-align:center}
input{appearance:none;width:88px;height:14px;margin:0;background:linear-gradient(#7591bd,#7591bd) center/100% 1px no-repeat}
input::-webkit-slider-thumb{appearance:none;width:9px;height:12px;background:#eef4fc;border:1px solid #4d648c;border-radius:1px 1px 5px 5px}
.c:last-child{margin-right:5px}`,
`<span>Страница: 1 из 1</span><span>Число слов: 1</span><ui-icon class="i" name="spell"></ui-icon><span class="l">английский (США)</span>
<div class="v"><div><tool-button on icon="vprint" label="Разметка страницы"></tool-button><tool-button icon="vread" label="Режим чтения"></tool-button><tool-button icon="vweb" label="Веб-документ"></tool-button><tool-button icon="voutline" label="Структура"></tool-button><tool-button icon="vdraft" label="Черновик"></tool-button></div></div>
<span class="z">100%</span><button class="c" aria-label="Уменьшить">−</button><input type="range" aria-label="Масштаб" value="50"><button class="c" aria-label="Увеличить">+</button>`);

define('task-button', `
:host{display:block;width:139px;height:18px}
button{display:flex;align-items:center;gap:3px;width:100%;height:100%;padding:0 7px;border:1px solid #55585c;border-radius:2px;background:linear-gradient(#5c5e61,#2b2c2e 50%,#151617);color:#f3f3f3;white-space:nowrap}
:host([on]) button{background:#0b0b0c;border-color:#777}`,
  el => `<button><ui-icon name="${el.getAttribute('icon')}"></ui-icon><slot></slot></button>`);

define('task-bar', `
:host{display:flex;align-items:center;height:22px;background:linear-gradient(#7a7b7d,#4a4b4d 15%,#242526 60%,#060606);color:#f3f3f3}
.q{display:flex;gap:8px;width:111px;padding-left:10px;--s:14px;align-items:center}
.q tool-button:first-child{margin-right:6px}
.m{font-size:16px;line-height:12px;margin:0 0 6px 2px}
.b{display:flex;gap:1px;--s:14px;margin-left:10px}
.t{margin-left:auto;display:flex;align-items:center;padding-right:11px;--s:14px}
.en{background:#6e7073;padding:0 2px;line-height:12px;margin-right:12px}
.tr{--s:12px;margin-right:5px}
time{margin-left:5px}`,
`<div class="q"><tool-button icon="win" label="Пуск"></tool-button><tool-button icon="chrome" label="Chrome"></tool-button><tool-button icon="ut" label="Torrent"></tool-button><tool-button icon="fox" label="Firefox"></tool-button><span class="m">»</span></div>
<div class="b"><task-button icon="fox">Визуальные заклад...</task-button><task-button on icon="word">Документ Microsoft ...</task-button><task-button icon="calc">Калькулятор Плюс</task-button></div>
<div class="t"><span class="en">EN</span><ui-icon class="tr" name="tri"></ui-icon><ui-icon name="badge"></ui-icon><ui-icon name="vee"></ui-icon><time>14:18</time></div>`);

define('word-app', ':host{display:flex;flex-direction:column;height:100vh;min-height:0;background:#bfdbff}doc-area{flex:1}title-bar,ribbon-tabs,ribbon-body,status-bar,task-bar{flex:none}',
'<title-bar></title-bar><ribbon-tabs></ribbon-tabs><ribbon-body></ribbon-body><doc-area></doc-area><status-bar></status-bar><task-bar></task-bar>');
</script>
</body>
</html>
